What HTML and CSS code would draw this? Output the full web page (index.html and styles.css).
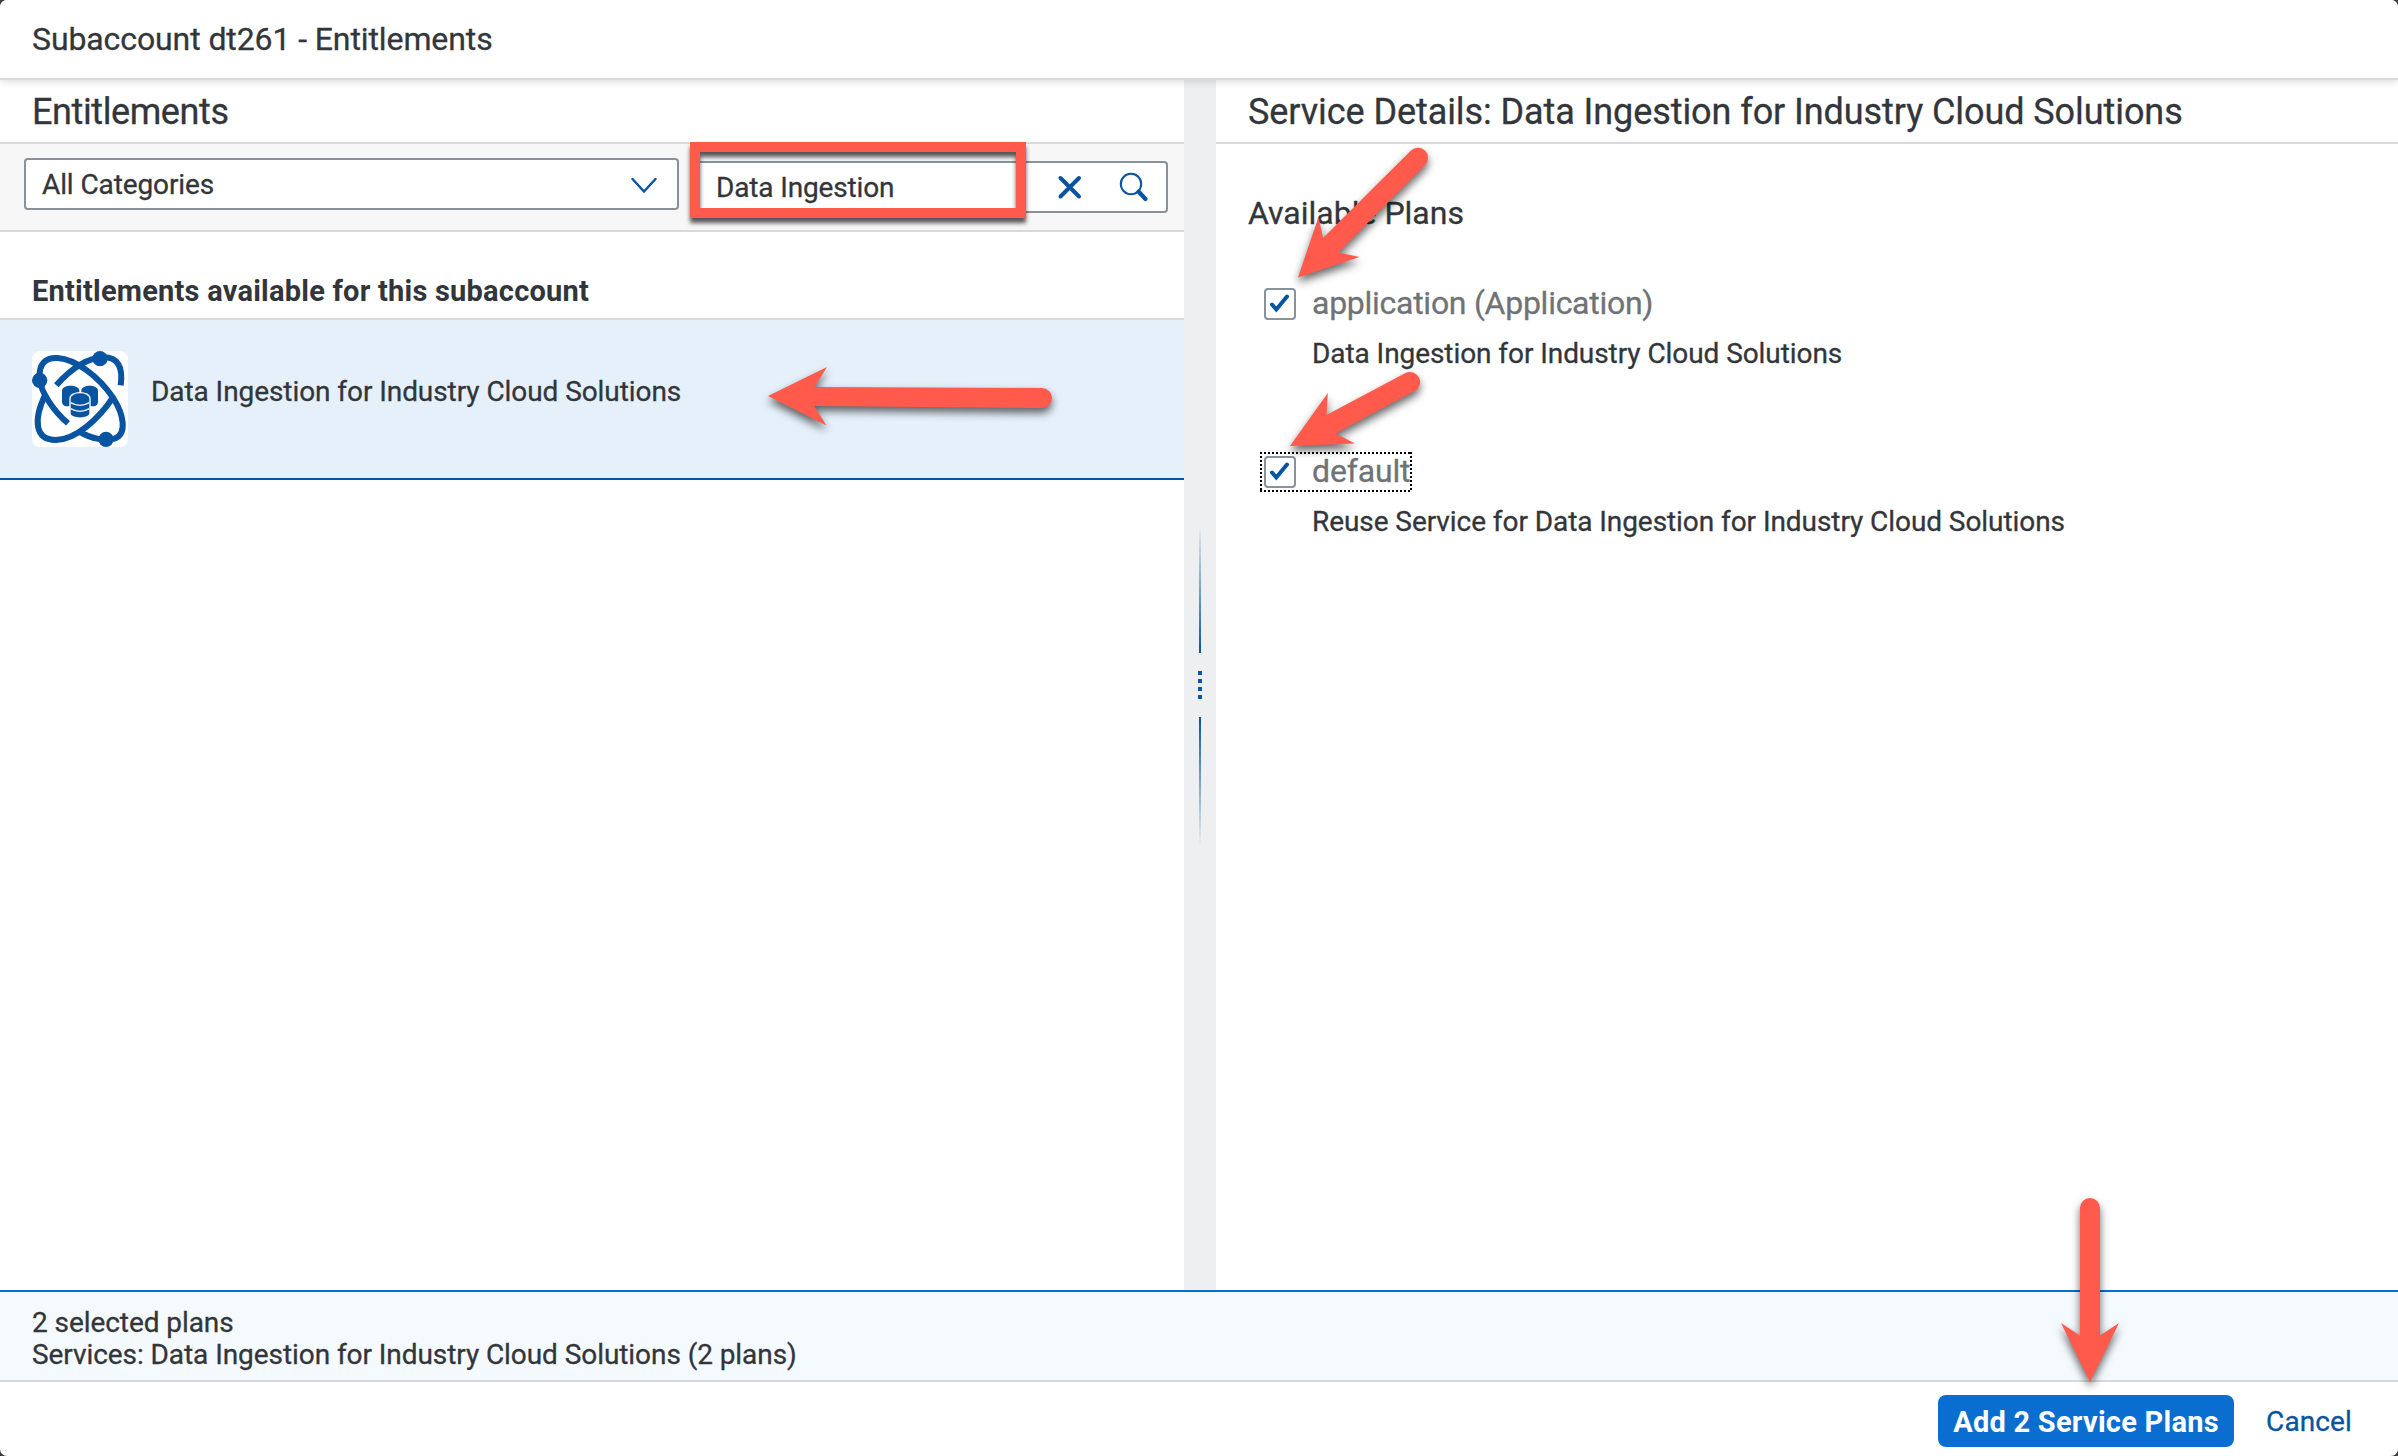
FILE: index.html
```
<!DOCTYPE html>
<html lang="en">
<head>
<meta charset="utf-8">
<title>Subaccount dt261 - Entitlements</title>
<link rel="stylesheet" href="styles.css">
</head>
<body>
<div class="dialog">
  <header class="dialog-header">Subaccount dt261 - Entitlements</header>
  <main class="split">
    <section class="pane pane-left">
      <h1 class="pane-title pane-title-short">Entitlements</h1>
      <div class="filters">
        <div class="select">
          <span>All Categories</span>
          <svg class="chevron" viewBox="0 0 28 28"><path d="M2.500 8 14 20.500 25.500 8"/></svg>
        </div>
        <div class="search">
          <span class="search-text">Data Ingestion</span>
          <svg class="icon-clear" viewBox="0 0 28 28"><path d="M4.500 5 23 23.500M23 5 4.500 23.500" stroke-linecap="round"/></svg>
          <svg class="icon-search" viewBox="0 0 32 32"><circle cx="13" cy="13" r="10.200"/><path d="M20.500 20.500 27.500 28"/></svg>
        </div>
      </div>
      <h2 class="group-title">Entitlements available for this subaccount</h2>
      <div class="item">
        <svg class="item-icon" viewBox="18 21 288 288">
          <g fill="none" stroke="#0854a0" stroke-width="18">
            <path d="M126 238C85 203 44 145 41 105C37 58 60 40 95 42C150 46 218 97 261 161C295 214 302 268 268 283C240 292 196 285 160 263"/>
            <path d="M91 124C130 80 180 42 232 40C274 40 292 66 284 124"/>
            <path d="M261 160C218 225 150 286 90 288C28 288 20 230 58 152"/>
          </g>
          <g fill="#0854a0">
            <circle cx="41" cy="109" r="23"/><circle cx="222" cy="44" r="23"/><circle cx="240" cy="286" r="23"/>
            <path d="M108 140C108 120 160 120 160 140V187H120Q108 184 108 174Z"/>
            <path d="M166 140C166 120 216 120 216 140V174Q216 184 204 187H166Z"/>
            <path d="M132 164C132 140 192 140 192 164V208C192 227 132 227 132 208Z" stroke="#fff" stroke-width="4"/>
          </g>
          <path d="M134 176Q162 192 190 176M134 194Q162 210 190 194" fill="none" stroke="#fff" stroke-width="4"/>
        </svg>
        <span class="item-text">Data Ingestion for Industry Cloud Solutions</span>
      </div>
    </section>
    <div class="splitter">
      <i class="bar bar-top"></i>
      <div class="grip"><i></i><i></i><i></i><i></i></div>
      <i class="bar bar-bottom"></i>
    </div>
    <section class="pane pane-right">
      <h1 class="pane-title">Service Details: Data Ingestion for Industry Cloud Solutions</h1>
      <div class="plans">
        <h2 class="plans-title">Available Plans</h2>
        <div class="plan">
          <div class="plan-check">
            <svg class="checkbox" viewBox="0 0 32 32"><rect x="1" y="1" width="30" height="30" rx="3"/><path d="M8 16.500 12.300 21.500 23 8.500"/></svg>
            <span class="plan-name plan-name-long">application (Application)</span>
          </div>
          <p class="plan-desc">Data Ingestion for Industry Cloud Solutions</p>
        </div>
        <div class="plan">
          <div class="plan-check focused">
            <svg class="checkbox" viewBox="0 0 32 32"><rect x="1" y="1" width="30" height="30" rx="3"/><path d="M8 16.500 12.300 21.500 23 8.500"/></svg>
            <span class="plan-name">default</span>
          </div>
          <p class="plan-desc">Reuse Service for Data Ingestion for Industry Cloud Solutions</p>
        </div>
      </div>
    </section>
  </main>
  <div class="summary">
    <div>2 selected plans</div>
    <div>Services: Data Ingestion for Industry Cloud Solutions (2 plans)</div>
  </div>
  <footer class="dialog-footer">
    <button class="btn btn-primary">Add 2 Service Plans</button>
    <button class="btn btn-text">Cancel</button>
  </footer>
  <svg class="annotations" viewBox="0 0 2398 1456">
    <path class="frame" fill-rule="evenodd" d="M690 142H1026V218H690ZM700 152V208H1016V152Z"/>
    <path class="arrow" d="M768 396 827 367 814.500 387 1042 388A10 10 0 0 1 1042 408L814 406 826.500 425.500Z"/>
    <path class="arrow" d="M1298 277.500 1318.600 216.800 1323 238 1411 150.500A10 10 0 0 1 1425 165L1338.500 252.500 1359.500 257Z"/>
    <path class="arrow" d="M1290 446 1327.800 393 1326.500 415 1405.500 373A10 10 0 0 1 1414.500 391L1335.500 433.500 1355 443.600Z"/>
    <path class="arrow" d="M2090 1382 2061 1323 2080 1335.500V1208A10 10 0 0 1 2100 1208V1335.500L2119 1323Z"/>
  </svg>
</div>
</body>
</html>
```
FILE: styles.css
```
* { box-sizing: border-box; }

body {
  margin: 0;
  background: #3c3c40;
  color: #32363a;
  font: 28px/32px Roboto, "Liberation Sans", sans-serif;
  letter-spacing: -0.07px;
  -webkit-text-stroke: 0.3px;
}

h1, h2, p { margin: 0; font-weight: 400; white-space: nowrap; }

.dialog {
  position: relative;
  display: flex;
  flex-direction: column;
  width: 2398px;
  height: 1456px;
  overflow: hidden;
  border-radius: 7px;
  background: #fff;
}

.dialog-header {
  position: relative;
  z-index: 1;
  height: 80px;
  padding-left: 32px;
  border-bottom: 2px solid #d9d9d9;
  box-shadow: 0 1px 8px rgba(0, 0, 0, 0.16);
  background: #fff;
  font-size: 32px;
  line-height: 78px;
  letter-spacing: -0.1px;
}

.split { display: flex; height: 1210px; }
.pane-left { width: 1184px; }
.pane-right { flex: 1; }

.pane-title {
  height: 64px;
  padding: 1px 0 0 32px;
  border-bottom: 2px solid #d9d9d9;
  font-size: 36px;
  line-height: 62px;
  letter-spacing: -0.08px;
}
.pane-title-short { letter-spacing: -0.4px; }

.filters {
  display: flex;
  align-items: flex-start;
  gap: 17px;
  height: 88px;
  padding: 14px 16px 0 24px;
  border-bottom: 2px solid #d9d9d9;
  background: #f7f7f7;
}

.select, .search {
  display: flex;
  align-items: center;
  height: 52px;
  border: 2px solid #89919a;
  border-radius: 4px;
  background: #fff;
}
.select { width: 655px; justify-content: space-between; padding: 0 19px 0 16px; letter-spacing: -0.1px; }
.select span { padding-top: 2px; }
.chevron { margin-top: 2px; }
.search { flex: 1; margin-top: 3px; padding: 0 16px 0 18px; letter-spacing: -0.15px; }
.search-text { flex: 1; padding-top: 1px; }

.chevron, .icon-clear, .icon-search { fill: none; stroke: #0854a0; }
.chevron { width: 28px; height: 28px; stroke-width: 2.4; stroke-linecap: round; }
.icon-clear { width: 28px; height: 28px; margin-right: 34px; stroke-width: 4; }
.icon-search { width: 32px; height: 32px; stroke-width: 2; }
.icon-search path { stroke-width: 4.2; stroke-linecap: round; }

.group-title {
  height: 88px;
  padding: 33px 0 0 32px;
  border-bottom: 2px solid #d9d9d9;
  font-size: 29px;
  line-height: 53px;
  font-weight: 700;
  letter-spacing: 0.23px;
  -webkit-text-stroke: 0;
}

.item {
  display: flex;
  gap: 23px;
  height: 160px;
  padding: 31px 32px 0;
  border-bottom: 2px solid #0854a0;
  background: #e5f0fa;
}
.item-icon { width: 96px; height: 96px; border-radius: 8px; background: #fff; }
.item-text { padding-top: 25px; }

.splitter {
  display: flex;
  flex-direction: column;
  align-items: center;
  width: 32px;
  padding-top: 445px;
  background: #edeff0;
}
.bar { width: 2px; height: 128px; }
.bar-top { background: linear-gradient(to top, #0854a0, rgba(8, 84, 160, 0)); }
.bar-bottom { background: linear-gradient(to bottom, #0854a0, rgba(8, 84, 160, 0)); }
.grip { display: flex; flex-direction: column; gap: 4px; padding: 18px 0; }
.grip i { width: 4px; height: 4px; background: #0854a0; }

.plans { padding: 53px 32px 0; }
.plans-title { font-size: 32px; line-height: 32px; letter-spacing: 0; }
.plan { height: 168px; padding: 0 0 0 12px; }
.plans-title + .plan { margin-top: 55px; }

.plan-check {
  display: flex;
  align-items: center;
  gap: 16px;
  width: max-content;
  height: 40px;
  padding-left: 4px;
}
.plan-check.focused { position: relative; width: 152px; }
.plan-check.focused::after {
  content: "";
  position: absolute;
  inset: 0;
  background:
    repeating-linear-gradient(90deg, #000 0 2px, transparent 2px 4px) top / 100% 2px no-repeat,
    repeating-linear-gradient(90deg, #000 0 2px, transparent 2px 4px) bottom / 100% 2px no-repeat,
    repeating-linear-gradient(#000 0 2px, transparent 2px 4px) left / 2px 100% no-repeat,
    repeating-linear-gradient(#000 0 2px, transparent 2px 4px) right / 2px 100% no-repeat;
}
.checkbox { width: 32px; height: 32px; fill: #fff; }
.checkbox rect { stroke: #89919a; stroke-width: 2; }
.checkbox path { fill: none; stroke: #0854a0; stroke-width: 4; stroke-linecap: round; }

.plan-name { color: #707376; font-size: 32px; line-height: 38px; padding-bottom: 3px; letter-spacing: -0.15px; }
.plan-name-long { letter-spacing: -0.27px; }
.plan-desc { padding: 14px 0 0 52px; }

.summary {
  height: 92px;
  padding: 15px 32px 0;
  border-top: 2px solid #0a6ed1;
  border-bottom: 2px solid #d9d9d9;
  background: #f5faff;
}

.dialog-footer {
  display: flex;
  justify-content: flex-end;
  padding: 13px 29px 0 0;
}
.btn {
  height: 52px;
  padding: 2px 0 0;
  border: 0;
  border-radius: 8px;
  font: inherit;
}
.btn-primary {
  width: 296px;
  background: #0a6ed1;
  color: #fff;
  font-size: 29px;
  font-weight: 700;
  letter-spacing: 0.25px;
  -webkit-text-stroke: 0;
}
.btn-text { width: 135px; padding-left: 15px; background: transparent; color: #0854a0; letter-spacing: 0.1px; }

.annotations {
  position: absolute;
  inset: 0;
  z-index: 2;
  width: 2398px;
  height: 1456px;
  fill: #ff5a4c;
  pointer-events: none;
}
.frame { filter: drop-shadow(0 5px 2px rgba(0, 0, 0, 0.65)); }
.arrow { filter: drop-shadow(0 5px 4px rgba(0, 0, 0, 0.6)); }
```
